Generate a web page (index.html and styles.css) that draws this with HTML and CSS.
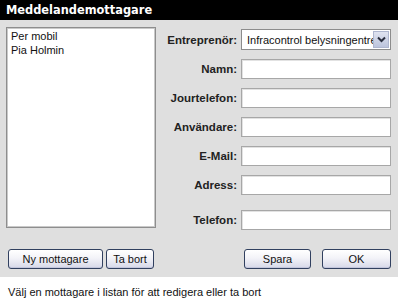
FILE: index.html
```html
<!DOCTYPE html>
<html>
<head>
<meta charset="utf-8">
<link rel="stylesheet" href="styles.css">
</head>
<body>
<div class="title">Meddelandemottagare</div>
<div class="panel">
  <div class="listbox">
    <div class="item">Per mobil</div>
    <div class="item">Pia Holmin</div>
  </div>
  <div class="form">
    <div class="row first">
      <label class="lbl">Entreprenör:</label>
      <div class="select">
        <span class="select-text">Infracontrol belysningentreprenad</span>
        <span class="arrow"><svg width="9" height="7" viewBox="0 0 9 7"><path d="M1 1.5 L4.5 5 L8 1.5" fill="none" stroke="#2a2f3f" stroke-width="2"/></svg></span>
      </div>
    </div>
    <div class="row"><label class="lbl">Namn:</label><div class="input"></div></div>
    <div class="row"><label class="lbl">Jourtelefon:</label><div class="input"></div></div>
    <div class="row"><label class="lbl">Användare:</label><div class="input"></div></div>
    <div class="row"><label class="lbl">E-Mail:</label><div class="input"></div></div>
    <div class="row"><label class="lbl">Adress:</label><div class="input"></div></div>
    <div class="row last"><label class="lbl">Telefon:</label><div class="input"></div></div>
  </div>
  <div class="btns left">
    <button class="btn w-ny">Ny mottagare</button>
    <button class="btn w-tabort">Ta bort</button>
  </div>
  <div class="btns right">
    <button class="btn w-spara">Spara</button>
    <button class="btn w-ok">OK</button>
  </div>
</div>
<div class="status">Välj en mottagare i listan för att redigera eller ta bort</div>
</body>
</html>
```
FILE: styles.css
```css
html, body {
  margin: 0;
  padding: 0;
  background: #ffffff;
  width: 398px;
  height: 300px;
  overflow: hidden;
  font-family: "Liberation Sans", Arial, sans-serif;
  font-size: 11px;
  color: #000;
}
.title {
  height: 20px;
  background: #000;
  color: #fff;
  font-family: "DejaVu Sans", Verdana, sans-serif;
  font-weight: bold;
  font-size: 11.4px;
  line-height: 20px;
  padding-left: 6px;
  box-sizing: border-box;
}
.panel {
  height: 257px;
  box-sizing: border-box;
  background: #dfdfdf;
  padding: 7px 7px 8px 6px;
  display: grid;
  grid-template-columns: 150px 1fr;
  grid-template-rows: 201px 20px;
  row-gap: 21px;
}
.listbox {
  background: #fff;
  border: 1px solid #8e8e8e;
  box-shadow: inset 1px 1px 0 #c9c9c9, inset -1px -1px 0 #c9c9c9;
  box-sizing: border-box;
  padding: 1px 3px;
}
.item {
  height: 14px;
  line-height: 14px;
  padding-left: 1px;
  font-size: 11px;
  color: #111;
}
.form {
  display: flex;
  flex-direction: column;
  padding-top: 2px;
}
.row {
  display: grid;
  grid-template-columns: 1fr 150px;
  column-gap: 4px;
  align-items: center;
  height: 20px;
  margin-top: 9px;
}
.row.first {
  margin-top: 0;
  height: 21px;
}
.row.last {
  margin-top: 15px;
}
.lbl {
  text-align: right;
  font-weight: bold;
  font-size: 11.5px;
  color: #222;
  white-space: nowrap;
}
.input {
  height: 20px;
  box-sizing: border-box;
  background: #fff;
  border: 1px solid #a7a7a7;
  box-shadow: inset 1px 1px 0 #e2e2e2;
}
.select {
  height: 21px;
  box-sizing: border-box;
  background: #fff;
  border: 1px solid #8c8c8c;
  display: flex;
  align-items: center;
  overflow: hidden;
}
.select-text {
  flex: 1;
  white-space: nowrap;
  overflow: hidden;
  padding-left: 5px;
  font-size: 11px;
  color: #111;
}
.arrow {
  width: 16px;
  height: 17px;
  margin-right: 1px;
  box-sizing: border-box;
  border: 1px solid #aeb6cf;
  background: linear-gradient(#dfe3f0, #bcc4dc);
  display: flex;
  align-items: center;
  justify-content: center;
}
.btns {
  display: flex;
  gap: 3px;
}
.btns.left {
  padding-left: 2px;
}
.btns.right {
  justify-content: flex-end;
  gap: 11px;
}
.btn {
  height: 20px;
  box-sizing: border-box;
  border: 1px solid #31405f;
  border-radius: 3px;
  background: linear-gradient(#ffffff 0%, #f3f3f8 45%, #d6d8e8 100%);
  box-shadow: inset 0 -1px 0 #c3c6dc;
  font-family: "Liberation Sans", Arial, sans-serif;
  font-size: 11px;
  color: #111;
  padding: 0;
  line-height: 18px;
}
.w-ny { width: 95px; }
.w-tabort { width: 48px; }
.w-spara { width: 67px; }
.w-ok { width: 69px; }
.status {
  padding-left: 8px;
  height: 23px;
  line-height: 30px;
  font-size: 11px;
  color: #111;
}
```
